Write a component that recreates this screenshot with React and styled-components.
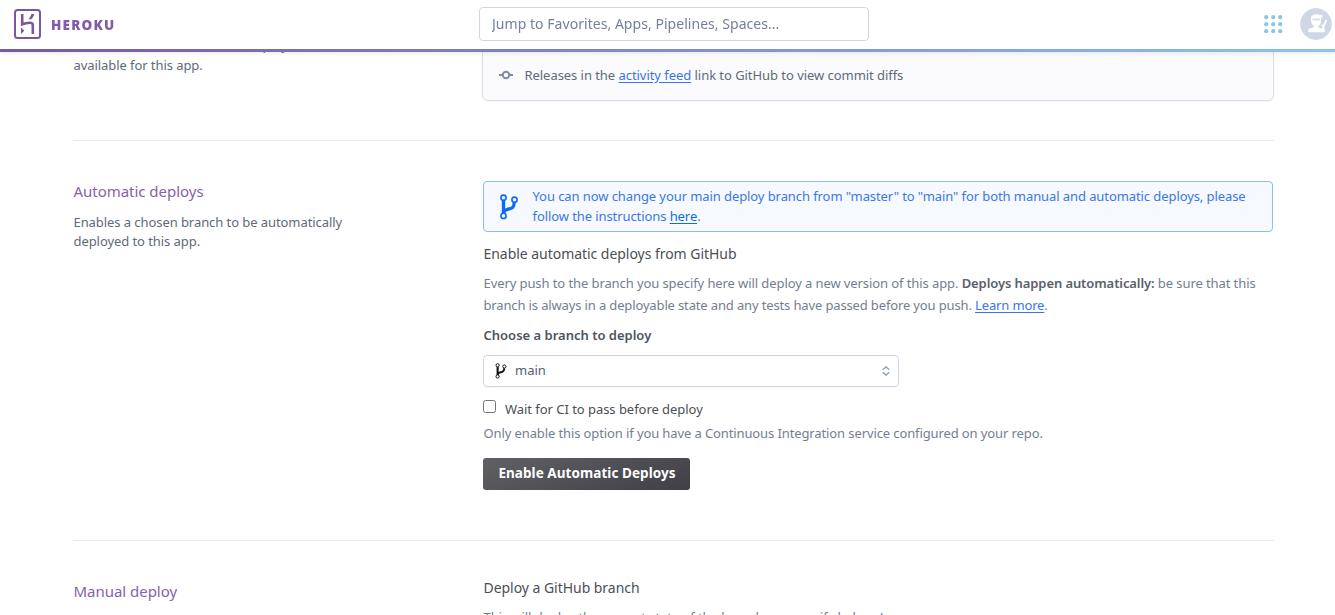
import React from 'react';
import styled, { createGlobalStyle } from 'styled-components';

const GlobalStyle = createGlobalStyle`
  *, *::before, *::after { box-sizing: border-box; }
  html, body { margin: 0; padding: 0; background: #fff; overflow: hidden; }
  body {
    font-family: "Noto Sans", "Open Sans", sans-serif;
    font-size: 13px;
    color: #5a6069;
  }
  h2, h3, p { margin: 0; font-weight: 400; }
`;

const Page = styled.div`
  height: 615px;
  overflow: hidden;
`;

const Header = styled.header`
  position: fixed;
  inset: 0 0 auto 0;
  z-index: 2;
  height: 52px;
  background: #fff;
  display: grid;
  grid-template-columns: 479px 390px 1fr;
  align-items: center;
  padding-bottom: 4px;
  box-shadow: 0 1px 4px rgba(60, 60, 100, 0.12);

  &::after {
    content: "";
    position: absolute;
    inset: auto 0 0 0;
    height: 3px;
    background: linear-gradient(90deg, #79589f 0%, #8ac5e7 100%);
  }
`;

const Brand = styled.div`
  display: flex;
  align-items: center;
  gap: 10px;
  padding-left: 14px;

  svg { display: block; }
`;

const Wordmark = styled.span`
  font-family: "Open Sans", "Noto Sans", sans-serif;
  font-size: 13.5px;
  font-weight: 800;
  letter-spacing: 1.2px;
  line-height: 20px;
  padding-top: 1px;
  color: #855ba8;
`;

const Search = styled.input`
  height: 34px;
  width: 390px;
  border: 1px solid #cfd7e6;
  border-radius: 4px;
  padding: 0 12px 1px;
  font: 400 14px/20px "Noto Sans", sans-serif;
  letter-spacing: 0.04px;
  outline: none;
  background: #fff;

  &::placeholder { color: #73819a; opacity: 1; }
`;

const HeaderTools = styled.div`
  display: flex;
  align-items: center;
  justify-content: flex-end;
  gap: 17px;
  padding-right: 3px;

  svg { display: block; }
`;

const Main = styled.main`
  width: 1201px;
  margin-left: 73px;
`;

const Section = styled.section`
  display: grid;
  grid-template-columns: 410px 1fr;
  height: ${(p) => p.$height}px;
  padding-top: ${(p) => p.$top}px;
  border-bottom: 1px solid #e9e8f3;
`;

const SideTitle = styled.h2`
  padding-left: 0.5px;
  font-size: 15px;
  line-height: 20px;
  letter-spacing: -0.03px;
  color: #8464a8;
`;

const SideText = styled.p`
  padding-left: 0.5px;
  line-height: ${(p) => p.$line || 19}px;
  margin-top: ${(p) => p.$gap || 0}px;
  letter-spacing: -0.07px;
  color: #616a77;
  white-space: pre-line;
`;

const Link = styled.a`
  color: ${(p) => p.$color || '#3b74ec'};
  text-decoration: underline;
  text-underline-offset: 2px;
`;

const ReleaseCard = styled.div`
  display: flex;
  align-items: center;
  gap: 10.5px;
  height: 71px;
  margin-left: -1px;
  padding: 18px 16px 0;
  background: #fbfbfe;
  border: 1px solid #d9dfe8;
  border-radius: 6px;
  box-shadow: 0 1px 2px rgba(0, 0, 0, 0.04);
  color: #616a77;
  line-height: 20px;
  letter-spacing: -0.05px;
`;

const Notice = styled.div`
  display: flex;
  align-items: center;
  gap: 12.5px;
  width: 790px;
  height: 51px;
  padding-left: 14px;
  border: 1px solid #8abdf0;
  border-radius: 4px;
  background: #f6f9fe;
  color: #3b78e4;
  line-height: 20px;
  letter-spacing: -0.085px;
  white-space: nowrap;

  span { padding-bottom: 2px; }
`;

const Title = styled.h3`
  padding-left: 0.5px;
  font-size: 14px;
  line-height: 20px;
  margin-top: ${(p) => p.$gap || 0}px;
  letter-spacing: -0.04px;
  color: #4c4f56;
`;

const Copy = styled.p`
  padding-left: 0.5px;
  line-height: 22px;
  margin-top: ${(p) => p.$gap || 0}px;
  letter-spacing: ${(p) => p.$track || 0}px;
  color: #747e91;
  white-space: nowrap;

  strong { font-weight: 600; color: #5a6069; }
`;

const Label = styled.div`
  padding-left: 0.5px;
  margin-top: 9px;
  line-height: 20px;
  font-weight: 600;
  color: #4c5560;
`;

const Select = styled.div`
  display: flex;
  align-items: center;
  width: 416px;
  height: 32px;
  margin-top: 10px;
  padding: 0 8px 0 11px;
  border: 1px solid #cfd7e6;
  border-radius: 4px;
  box-shadow: 0 1px 1px rgba(0, 0, 0, 0.03);
  color: #56606e;

  span { flex: 1; padding: 0 0 3px 8px; }
`;

const CheckRow = styled.label`
  display: flex;
  align-items: flex-start;
  gap: 9px;
  margin-top: 12px;
  line-height: 20px;
  letter-spacing: -0.04px;
  color: #4c4f56;

  input { width: 13px; height: 13px; margin: 1px 0 0; }
`;

const Button = styled.button`
  display: block;
  width: 207px;
  height: 32px;
  margin-top: 14px;
  padding: 0 0 2px 1px;
  border: 0;
  border-radius: 3px;
  background: linear-gradient(160deg, #606065, #403f45);
  color: #fff;
  font: 700 13.5px/20px "Noto Sans", sans-serif;
  letter-spacing: 0.06px;
  white-space: nowrap;
`;

const HerokuLogo = () => (
  <svg width="27" height="30" viewBox="0 0 27 30" fill="none">
    <rect x="1" y="1" width="25" height="28" rx="2.5" stroke="#79589f" strokeWidth="2" />
    <path d="M8.2 5v10.3c2.5-1 5-1.6 7.700-1.600 2.400 0 2.900 1 2.900 2.300V25" stroke="#79589f" strokeWidth="2.600" />
    <path d="M7 18.500l3.300 3.300L7 25z" fill="#79589f" />
    <path d="M17.300 5h2.900c-.3 2-1.400 3.800-2.900 5.300h-2.900c1.500-1.700 2.500-3.400 2.900-5.300z" fill="#79589f" />
  </svg>
);

const AppsIcon = () => (
  <svg width="19" height="19" viewBox="0 0 19 19" fill="#8ac5e7">
    {[2.2, 9.2, 16.2].map((y) =>
      [2.2, 9.2, 16.2].map((x) => <circle key={`${x}-${y}`} cx={x} cy={y} r="2.1" />)
    )}
  </svg>
);

const Avatar = () => (
  <svg width="32" height="32" viewBox="0 0 32 32">
    <circle cx="16" cy="16" r="15.500" fill="#cfd7e6" stroke="#d9dade" />
    <path
      fill="#fff"
      d="M11 9.200C12 7 14 6.200 16.300 6.200c1.700 0 3 .4 3.900 1.100l2.600-.7-.8 1.500 1.200 1.400-2.200-.2c.3 1.300.1 3.800-.4 5.600-.4 1.600-1.400 2.600-2.300 3.200v1.300l3.500 1 3.700-8.800 1.700.8-3.100 7.200c.5.7.7 2.500.6 4.600H8.100c-.2-2.600.4-3.500 2.200-3.900l3.700-1v-1.200c-1.800-1.200-2.700-3.200-3-5.600z"
    />
    <path d="M12.300 10.500h7.700v1.700c-1.500.6-2.700.5-3.800-.2-1.100.7-2.500.8-3.900.1z" fill="#cfd7e6" />
    <path d="M13.300 11.300h1.700M17.300 11.300h1.700" stroke="#fff" strokeWidth=".8" />
    <path d="M21.200 16.800l2.700 1.300" stroke="#fff" strokeWidth="1.300" />
  </svg>
);

const CommitIcon = () => (
  <svg width="15" height="10" viewBox="0 0 15 10" fill="none" stroke="#7f8aa3" strokeWidth="2">
    <circle cx="7" cy="5" r="3.200" />
    <path d="M0 5h3.800M10.200 5H14" />
  </svg>
);

const BranchIcon = ({ width, height, color, fill }) => (
  <svg width={width} height={height} viewBox="0 0 18 26" fill="none" stroke={color}>
    <path d="M3.500 6.500v13" strokeWidth="3.400" />
    <path d="M14.200 8.500c0 5.300-2.200 5.900-6 6.600-2.300.5-3.900 1.200-4.700 3.200" strokeWidth="3.200" />
    <g fill={fill} strokeWidth="1.600">
      <circle cx="3.500" cy="3.700" r="2.600" />
      <circle cx="14.500" cy="5.700" r="2.600" />
      <circle cx="3.500" cy="21.900" r="2.600" />
    </g>
  </svg>
);

const SortIcon = () => (
  <svg width="8" height="10" viewBox="0 0 8 10" fill="none" stroke="#96a3b8" strokeWidth="1.500">
    <path d="M.7 3.700L4 .9l3.300 2.800M.7 6.300L4 9.100l3.300-2.800" />
  </svg>
);

export default function App() {
  return (
    <Page>
      <GlobalStyle />
      <Header>
        <Brand>
          <HerokuLogo />
          <Wordmark>HEROKU</Wordmark>
        </Brand>
        <Search placeholder="Jump to Favorites, Apps, Pipelines, Spaces..." />
        <HeaderTools>
          <AppsIcon />
          <Avatar />
        </HeaderTools>
      </Header>
      <Main>
        <Section $height={141} $top={30}>
          <SideText $gap={5} $line={20}>{'Code diffs, manual and auto deploys are\navailable for this app.'}</SideText>
          <ReleaseCard>
            <CommitIcon />
            <span>
              Releases in the <Link>activity feed</Link> link to GitHub to view commit diffs
            </span>
          </ReleaseCard>
        </Section>
        <Section $height={400} $top={40}>
          <div>
            <SideTitle>Automatic deploys</SideTitle>
            <SideText $gap={12}>{'Enables a chosen branch to be automatically\ndeployed to this app.'}</SideText>
          </div>
          <div>
            <Notice>
              <BranchIcon width={22} height={26} color="#0a6cf0" fill="#f6f9fe" />
              <span>
                You can now change your main deploy branch from "master" to "main" for both manual and automatic deploys, please
                <br />
                follow the instructions <Link $color="#0a6cf0">here</Link>.
              </span>
            </Notice>
            <Title $gap={12}>Enable automatic deploys from GitHub</Title>
            <Copy $gap={8} $track={-0.09}>
              Every push to the branch you specify here will deploy a new version of this app. <strong>Deploys happen automatically:</strong> be sure that this
            </Copy>
            <Copy $track={-0.14}>
              branch is always in a deployable state and any tests have passed before you push. <Link>Learn more</Link>.
            </Copy>
            <Label>Choose a branch to deploy</Label>
            <Select>
              <BranchIcon width={12} height={16} color="#111" fill="#fff" />
              <span>main</span>
              <SortIcon />
            </Select>
            <CheckRow>
              <input type="checkbox" />
              Wait for CI to pass before deploy
            </CheckRow>
            <Copy $gap={3} $track={-0.11}>Only enable this option if you have a Continuous Integration service configured on your repo.</Copy>
            <Button>Enable Automatic Deploys</Button>
          </div>
        </Section>
        <Section $height={200} $top={40}>
          <SideTitle>Manual deploy</SideTitle>
          <div>
            <Title $gap={-3}>Deploy a GitHub branch</Title>
            <Copy $gap={8} $track={-0.07}>
              This will deploy the current state of the branch you specify below. <Link>Learn more</Link>.
            </Copy>
          </div>
        </Section>
      </Main>
    </Page>
  );
}
